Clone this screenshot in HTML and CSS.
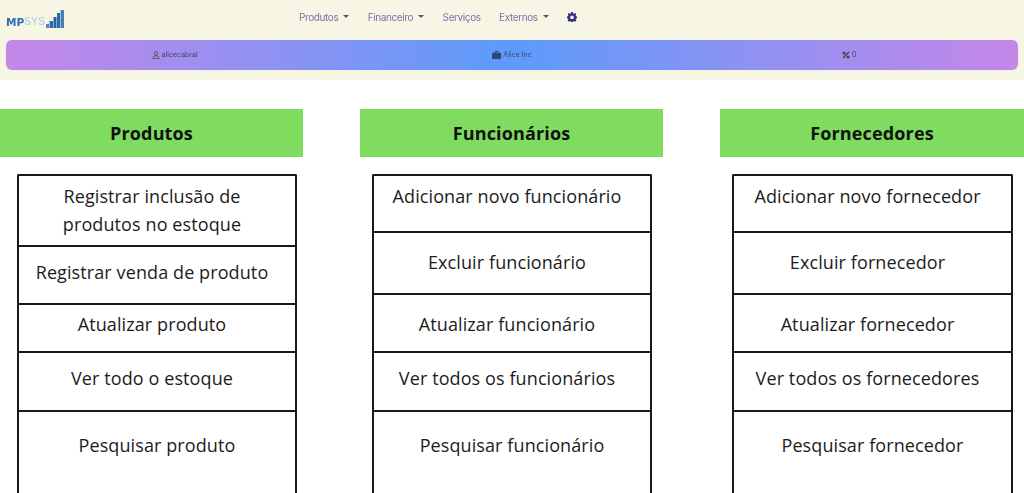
FILE: index.html
```html
<!DOCTYPE html>
<html lang="en">
<head>
    <meta charset="UTF-8">
    <meta name="viewport" content="width=device-width, initial-scale=1.0">
    <title>MPSYS</title>
    <link rel="stylesheet" href="styles.css">
</head>
<body>
    <header class="topo">
        <div class="navbar">
            <a class="logo">
                <span class="logo-mp">MP</span><span class="logo-sys">SYS</span>
                <svg class="logo-bars" width="18" height="18" viewBox="0 0 18 18">
                    <rect x="0" y="14" width="3" height="4" fill="#4f86c6"/>
                    <rect x="3.500" y="11" width="3.500" height="7" fill="#2f6aae"/>
                    <rect x="7.500" y="7" width="3" height="11" fill="#2b5f9f"/>
                    <rect x="11" y="3" width="3" height="15" fill="#2f6aa8"/>
                    <rect x="14.500" y="0" width="3.500" height="18" fill="#4d7fb5"/>
                </svg>
            </a>
            <nav class="menu">
                <a class="menu-item caret">Produtos</a>
                <a class="menu-item caret">Financeiro</a>
                <a class="menu-item">Serviços</a>
                <a class="menu-item caret">Externos</a>
                <a class="menu-item gear">
                    <svg width="10" height="10" viewBox="0 0 16 16"><path fill="#2f2a8c" fill-rule="evenodd" d="M6.600 0h2.800l.4 2.200 1.400.6L13 1.500l2 2-1.300 1.800.6 1.400 2.200.4v2.800l-2.200.4-.6 1.400 1.300 1.800-2 2-1.800-1.300-1.400.6-.4 2.200H6.600l-.4-2.200-1.400-.6L3 15.500l-2-2 1.300-1.800-.6-1.400-2.200-.4V7.100l2.200-.4.6-1.400L1 3.500l2-2 1.800 1.300 1.400-.6zM8 5.500a3 3 0 1 0 0 6 3 3 0 0 0 0-6z"/></svg>
                </a>
            </nav>
        </div>
        <div class="info-bar">
            <span class="info">
                <svg width="8" height="8" viewBox="0 0 16 16"><circle cx="8" cy="4.500" r="3.500" fill="none" stroke="#444" stroke-width="1.500"/><path d="M1.500 15c0-4 3-5.500 6.500-5.500s6.500 1.500 6.500 5.500z" fill="none" stroke="#444" stroke-width="1.500"/></svg>
                alicecabral
            </span>
            <span class="info">
                <svg width="9" height="8" viewBox="0 0 16 14"><path fill="#2c4a78" d="M5 0h6v3h5v11H0V3h5zm1.500 1.500V3h3V1.500z"/></svg>
                Alice Inc
            </span>
            <span class="info">
                <svg width="8" height="8" viewBox="0 0 16 16"><path stroke="#444" stroke-width="3" d="M2 14 14 2"/><circle cx="4" cy="4" r="3" fill="#444"/><circle cx="12" cy="12" r="3" fill="#444"/></svg>
                0
            </span>
        </div>
    </header>

    <main class="colunas">
        <section class="coluna coluna-produtos">
            <h2 class="titulo">Produtos</h2>
            <ul class="lista">
                <li class="item-duplo">Registrar inclusão de produtos no estoque</li>
                <li class="item-venda">Registrar venda de produto</li>
                <li class="item-curto">Atualizar produto</li>
                <li class="item-ver">Ver todo o estoque</li>
                <li class="item-pesquisar">Pesquisar produto</li>
            </ul>
        </section>
        <section class="coluna">
            <h2 class="titulo">Funcionários</h2>
            <ul class="lista">
                <li class="item-adicionar">Adicionar novo funcionário</li>
                <li class="item-excluir">Excluir funcionário</li>
                <li class="item-atualizar">Atualizar funcionário</li>
                <li class="item-ver">Ver todos os funcionários</li>
                <li class="item-pesquisar">Pesquisar funcionário</li>
            </ul>
        </section>
        <section class="coluna">
            <h2 class="titulo">Fornecedores</h2>
            <ul class="lista">
                <li class="item-adicionar">Adicionar novo fornecedor</li>
                <li class="item-excluir">Excluir fornecedor</li>
                <li class="item-atualizar">Atualizar fornecedor</li>
                <li class="item-ver">Ver todos os fornecedores</li>
                <li class="item-pesquisar">Pesquisar fornecedor</li>
            </ul>
        </section>
    </main>
</body>
</html>
```

FILE: styles.css
```css
html {
    overflow: hidden;
}
body {
    margin: 0;
    height: 493px;
    overflow: hidden;
    background-color: #fff;
    font-family: "Open Sans", sans-serif;
    color: #1c1c1c;
}
.topo {
    height: 80px;
    padding: 0 6px;
    box-sizing: border-box;
    background-color: #f7f5e4;
}
.navbar {
    height: 40px;
    display: flex;
    align-items: center;
    padding-bottom: 5px;
    box-sizing: border-box;
}
.logo {
    width: 293px;
    height: 18px;
    margin-top: 2px;
    display: flex;
    align-items: flex-end;
    line-height: 12px;
    filter: blur(0.4px);
}
.logo-mp {
    font-family: "DejaVu Sans", sans-serif;
    font-size: 10.5px;
    font-weight: 700;
    color: #2d6cb0;
}
.logo-sys {
    font-family: "Liberation Sans", sans-serif;
    font-size: 10px;
    color: #a9cbe6;
    letter-spacing: 0.4px;
}
.logo-bars {
    margin-left: 1px;
}
.menu {
    display: flex;
    align-items: center;
    gap: 18.5px;
    margin-top: -2px;
    font-family: Inter, sans-serif;
    font-size: 10px;
    letter-spacing: -0.4px;
    color: #7676a6;
    filter: blur(0.4px);
}
.menu-item {
    display: flex;
    align-items: center;
}
.caret::after {
    content: "";
    margin-left: 5px;
    border-top: 3px solid #55557f;
    border-left: 3px solid transparent;
    border-right: 3px solid transparent;
}
.gear {
    height: 12px;
}
.info-bar {
    height: 30px;
    padding-bottom: 1px;
    box-sizing: border-box;
    display: grid;
    grid-template-columns: repeat(3, 1fr);
    align-items: center;
    justify-items: center;
    border-radius: 6px;
    background: linear-gradient(90deg, #c587e8 0%, #5d9bfb 50%, #c587e8 100%);
    box-shadow: 0 0 1px #b9c4e8;
    font-family: Inter, sans-serif;
    font-size: 7px;
    color: #44446a;
}
.info {
    display: flex;
    align-items: center;
    gap: 2px;
    filter: blur(0.4px);
}
.colunas {
    display: grid;
    grid-template-columns: 303px 303px 304px;
    column-gap: 57px;
    padding-top: 29px;
}
.titulo {
    margin: 0;
    height: 48px;
    background-color: #7fdc5e;
    font-size: 18px;
    font-weight: 700;
    letter-spacing: 0.15px;
    line-height: 48px;
    text-align: center;
    color: #111;
}
.lista {
    margin: 17px 11px 0 12px;
    padding: 0;
    list-style: none;
    border: 2px solid #1a1a1a;
    border-bottom: 0;
    border-radius: 2px 2px 0 0;
}
.coluna-produtos .lista {
    margin: 17px 6px 0 17px;
}
.lista li {
    box-sizing: border-box;
    padding-right: 10px;
    border-bottom: 2px solid #1a1a1a;
    font-size: 18px;
    letter-spacing: 0.1px;
    line-height: 28px;
    text-align: center;
}
.lista .item-duplo {
    height: 71px;
    padding: 6px 24px 0 14px;
}
.item-adicionar {
    height: 57px;
    padding-top: 6px;
}
.item-venda {
    height: 58px;
    padding-top: 11px;
}
.item-excluir {
    height: 62px;
    padding-top: 15px;
}
.item-atualizar {
    height: 58px;
    padding-top: 15px;
}
.item-curto {
    height: 48px;
    padding-top: 5px;
}
.item-ver {
    height: 59px;
    padding-top: 11px;
}
.lista .item-pesquisar {
    height: 120px;
    padding: 19px 0 0;
    border-bottom: 0;
}
```
